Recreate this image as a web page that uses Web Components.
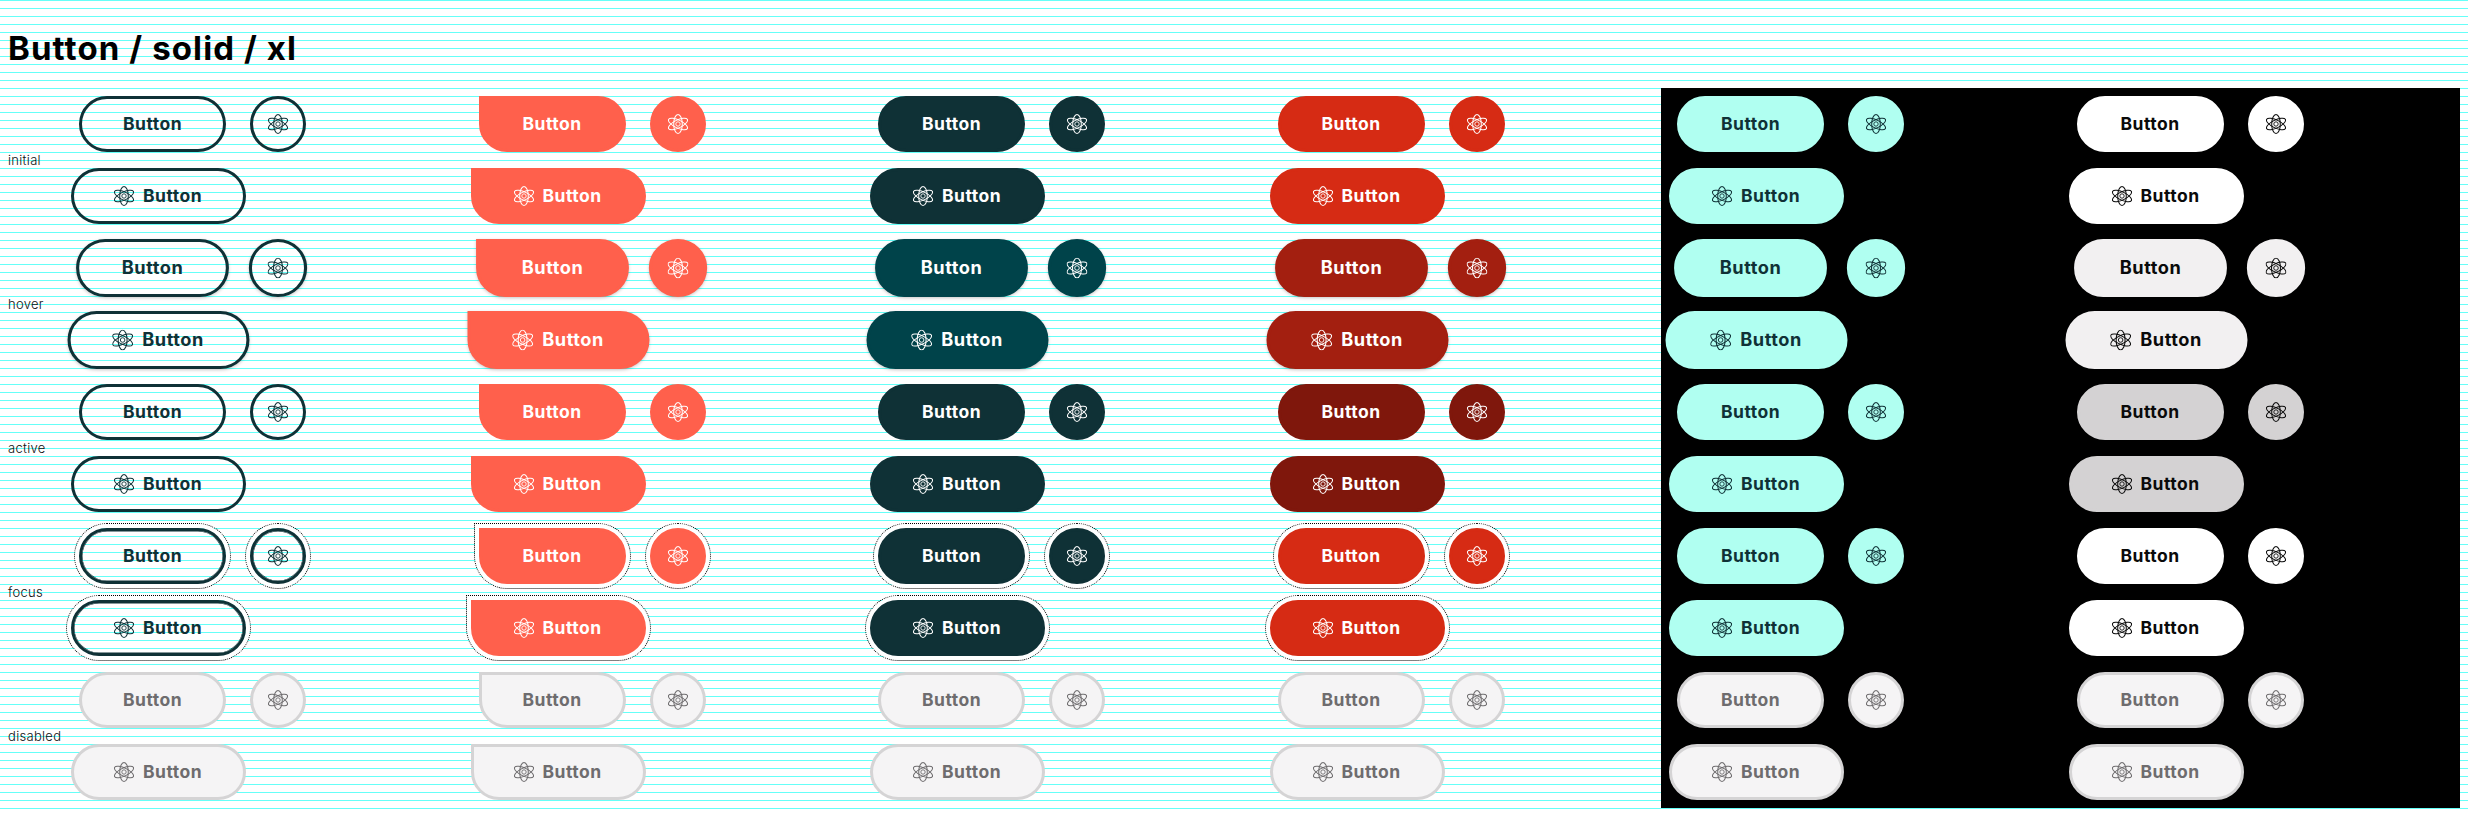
<!doctype html>
<html>
<head>
<meta charset="utf-8">
<title>Button / solid / xl</title>
<style>
  html, body { margin: 0; }
  body {
    background-color: #fff;
    background-image: linear-gradient(to bottom, #66fff8 1px, transparent 1px);
    background-size: 100% 8px;
    font-family: Inter, "Liberation Sans", sans-serif;
  }
</style>
</head>
<body>
<button-sheet heading="Button / solid / xl"></button-sheet>

<script>
class AtomIcon extends HTMLElement {
  connectedCallback() {
    const shadow = this.attachShadow({ mode: 'open' });
    shadow.innerHTML = `
      <style>
        :host { display: block; width: 20px; height: 20px; }
        svg { display: block; width: 100%; height: 100%; }
      </style>
      <svg viewBox="0 0 20 20" fill="none" stroke="currentColor" stroke-width="0.9">
        <g transform="translate(10 10) scale(1.13 1)">
          <ellipse rx="3.8" ry="9.5"></ellipse>
          <ellipse rx="3.8" ry="9.5" transform="rotate(60)"></ellipse>
          <ellipse rx="3.8" ry="9.5" transform="rotate(120)"></ellipse>
        </g>
        <circle cx="10" cy="10" r="2.2"></circle>
      </svg>
    `;
  }
}

class DemoButton extends HTMLElement {
  connectedCallback() {
    const shadow = this.attachShadow({ mode: 'open' });
    shadow.innerHTML = `
      <style>
        :host { display: inline-flex; }
        button {
          box-sizing: border-box;
          display: flex;
          align-items: center;
          justify-content: center;
          gap: 8px;
          height: 56px;
          margin: 0;
          padding: 0 40px;
          border: 3px solid var(--bd);
          border-radius: 28px;
          background: var(--bg);
          color: var(--fg);
          font: 700 17.5px/1 Inter, "Liberation Sans", sans-serif;
          letter-spacing: 0.5px;
        }
        .label { display: block; min-width: 61px; text-align: center; }
        :host([icon-only]) button { width: 56px; padding: 0; }
        :host([icon-only]) .label { display: none; }

        :host([variant="outline"]) { --bg: transparent; --bd: #0f3136; --fg: #0f3136; }
        :host([variant="brand"]) { --bg: #ff604c; --bd: #ff604c; --fg: #fff; }
        :host([variant="primary"]) { --bg: #0f3136; --bd: #0f3136; --fg: #fff; }
        :host([variant="danger"]) { --bg: #d62b14; --bd: #d62b14; --fg: #fff; }
        :host([variant="mint"]) { --bg: #b0fff1; --bd: #b0fff1; --fg: #0f3136; }
        :host([variant="white"]) { --bg: #fff; --bd: #fff; --fg: #0a0a0a; }

        :host([variant="brand"]:not([icon-only])) button { border-top-left-radius: 0; }

        :host([state="hover"]) button {
          transform: scale(1.04);
          box-shadow: 0 1px 3px rgba(0, 0, 0, 0.2);
        }
        :host([state="hover"][variant="primary"]) { --bg: #00434a; --bd: #00434a; }
        :host([state="hover"][variant="danger"]) { --bg: #a31f10; --bd: #a31f10; }
        :host([state="hover"][variant="white"]) { --bg: #f2f0f1; --bd: #f2f0f1; }

        :host([state="active"][variant="danger"]) { --bg: #7f170c; --bd: #7f170c; }
        :host([state="active"][variant="white"]) { --bg: #d4d2d3; --bd: #d4d2d3; }

        :host([state="focus"]) button {
          box-shadow: 0 0 0 4px var(--ring, #fff);
          outline: 1px dotted #000;
          outline-offset: 4px;
        }
        :host([state="focus"][variant="outline"]) button {
          box-shadow: inset 0 0 0 0.5px var(--bd), 0 0 0 4px var(--ring, #fff);
        }

        :host([state="disabled"]) { --bg: #f5f4f5; --bd: #d5d4d5; --fg: #6e6c6e; }
      </style>
      <button type="button">
        <slot name="icon"></slot>
        <span class="label"><slot></slot></span>
      </button>
    `;
  }
}

class StateCell extends HTMLElement {
  connectedCallback() {
    const variant = this.getAttribute('variant');
    const state = this.getAttribute('state');
    const attrs = `variant="${variant}" state="${state}"`;
    const shadow = this.attachShadow({ mode: 'open' });
    shadow.innerHTML = `
      <style>
        :host {
          box-sizing: border-box;
          display: flex;
          flex-direction: column;
          gap: 16px;
          height: 144px;
          padding: 8px;
        }
        :host([dark]) { background: #000; --ring: #000; }
        .row { display: flex; gap: 24px; padding-left: 8px; }
        .row.wide { padding-left: 0; }
      </style>
      <div class="row">
        <demo-button ${attrs}>Button</demo-button>
        <demo-button ${attrs} icon-only><atom-icon slot="icon"></atom-icon></demo-button>
      </div>
      <div class="row wide">
        <demo-button ${attrs}><atom-icon slot="icon"></atom-icon>Button</demo-button>
      </div>
    `;
  }
}

class ButtonSheet extends HTMLElement {
  connectedCallback() {
    const states = ['initial', 'hover', 'active', 'focus', 'disabled'];
    const variants = ['outline', 'brand', 'primary', 'danger', 'mint', 'white'];

    const rows = states.map((state) => {
      const cells = variants.map((variant, i) =>
        `<state-cell variant="${variant}" state="${state}" ${i > 3 ? 'dark' : ''}></state-cell>`
      ).join('');
      return `<div class="state">${state}</div>${cells}`;
    }).join('');

    const shadow = this.attachShadow({ mode: 'open' });
    shadow.innerHTML = `
      <style>
        :host { display: block; padding: 0 8px; }
        h1 {
          box-sizing: border-box;
          height: 88px;
          margin: 0;
          padding-top: 29px;
          color: #000;
          font: 700 33px/38px Inter, "Liberation Sans", sans-serif;
          letter-spacing: 1.1px;
        }
        .grid { display: grid; grid-template-columns: 55px repeat(6, 1fr); }
        .state {
          align-self: center;
          color: #111;
          font: 300 13px/16px Inter, "Liberation Sans", sans-serif;
          letter-spacing: 0.3px;
        }
      </style>
      <h1>${this.getAttribute('heading')}</h1>
      <div class="grid">${rows}</div>
    `;
  }
}

customElements.define('atom-icon', AtomIcon);
customElements.define('demo-button', DemoButton);
customElements.define('state-cell', StateCell);
customElements.define('button-sheet', ButtonSheet);
</script>
</body>
</html>
